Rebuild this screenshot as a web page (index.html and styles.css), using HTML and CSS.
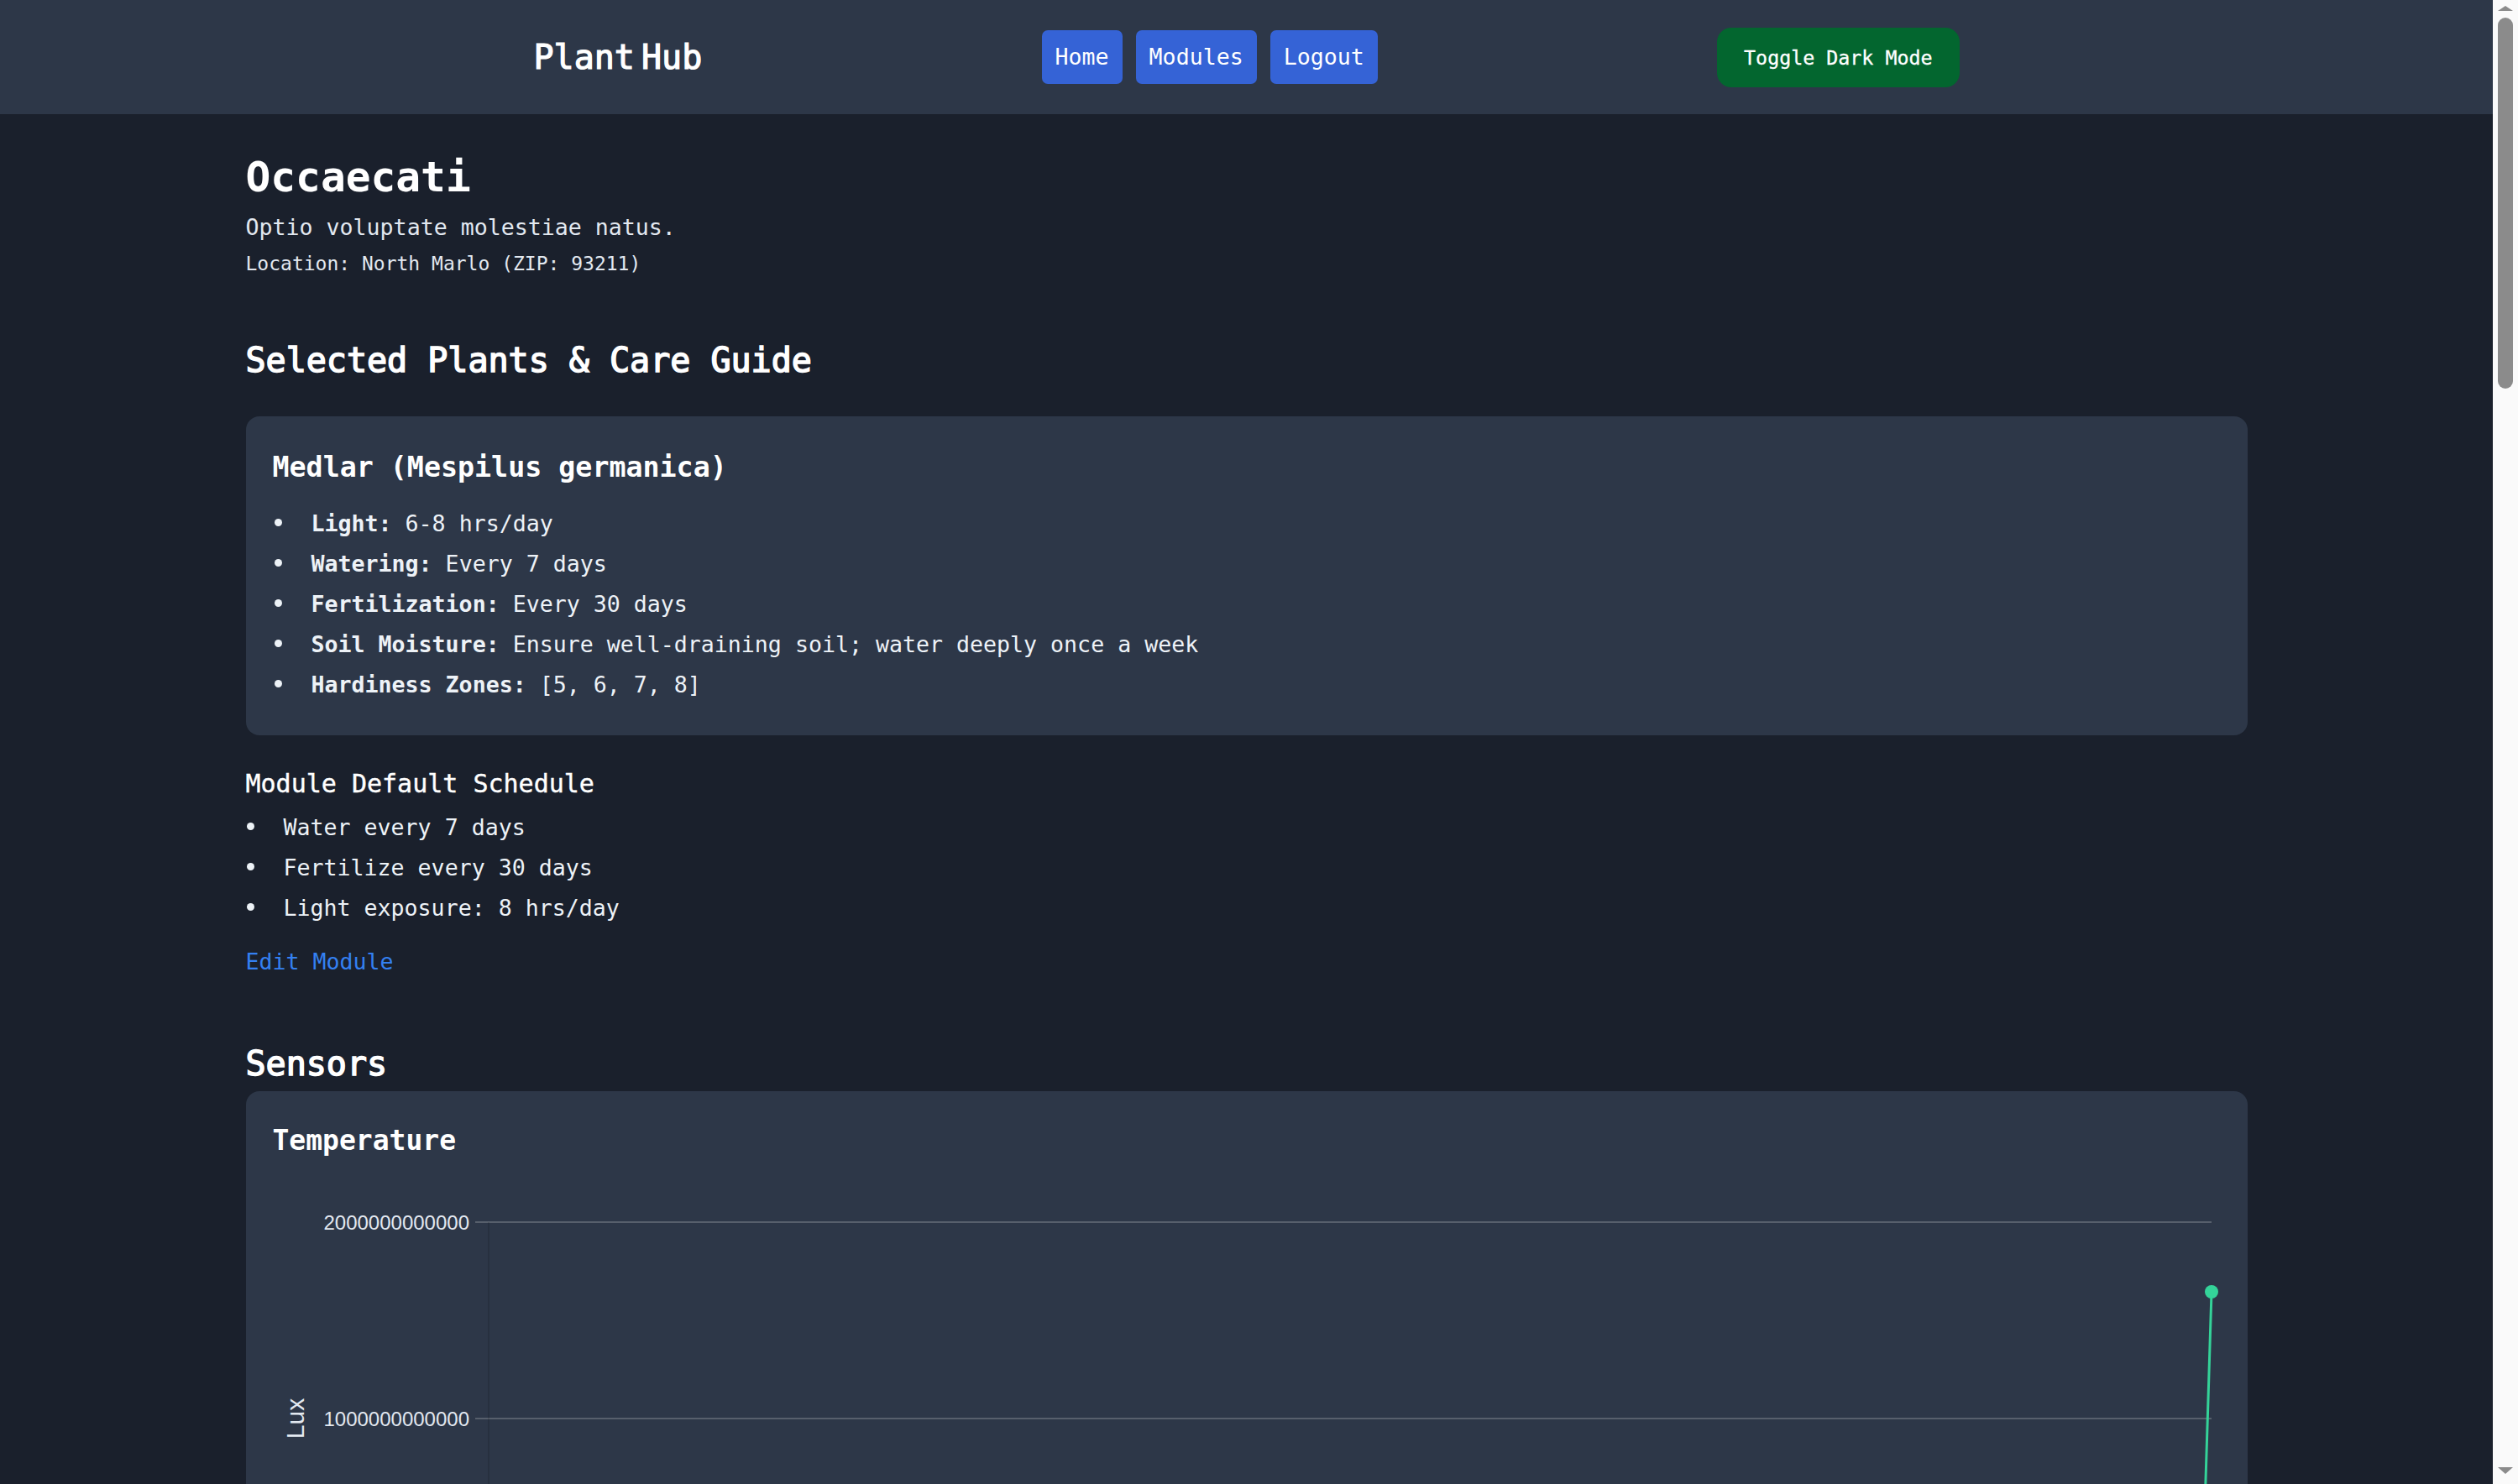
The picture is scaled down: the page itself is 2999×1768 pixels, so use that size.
FILE: index.html
```html
<!DOCTYPE html>
<html lang="en">
<head>
<meta charset="utf-8">
<title>Plant Hub</title>
<link rel="stylesheet" href="styles.css">
</head>
<body>
<header class="topbar">
  <div class="topbar-inner">
    <div class="brand">Plant Hub</div>
    <nav class="nav">
      <a class="nav-btn" href="#">Home</a>
      <a class="nav-btn" href="#">Modules</a>
      <a class="nav-btn" href="#">Logout</a>
    </nav>
    <button class="toggle" type="button">Toggle Dark Mode</button>
  </div>
</header>

<main class="page">
  <h1 class="title">Occaecati</h1>
  <p class="desc">Optio voluptate molestiae natus.</p>
  <p class="location">Location: North Marlo (ZIP: 93211)</p>

  <h2 class="section-title">Selected Plants &amp; Care Guide</h2>
  <div class="plant-card">
    <h3 class="plant-name">Medlar (Mespilus germanica)</h3>
    <ul class="care-list">
      <li><strong>Light:</strong> 6-8 hrs/day</li>
      <li><strong>Watering:</strong> Every 7 days</li>
      <li><strong>Fertilization:</strong> Every 30 days</li>
      <li><strong>Soil Moisture:</strong> Ensure well-draining soil; water deeply once a week</li>
      <li><strong>Hardiness Zones:</strong> [5, 6, 7, 8]</li>
    </ul>
  </div>

  <h3 class="schedule-title">Module Default Schedule</h3>
  <ul class="schedule-list">
    <li>Water every 7 days</li>
    <li>Fertilize every 30 days</li>
    <li>Light exposure: 8 hrs/day</li>
  </ul>
  <p class="edit"><a class="edit-link" href="#">Edit Module</a></p>

  <h2 class="section-title sensors-title">Sensors</h2>

  <section class="sensor-card">
    <h3 class="sensor-name">Temperature</h3>
    <svg class="chart" width="2320" height="640" viewBox="0 0 2320 640">
      <line class="grid" x1="241" y1="56" x2="2309" y2="56"/>
      <line class="grid" x1="241" y1="290" x2="2309" y2="290"/>
      <line class="grid" x1="241" y1="524" x2="2309" y2="524"/>
      <line class="axis" x1="257" y1="56" x2="257" y2="540"/>
      <text class="ylabel" x="234" y="56">2000000000000</text>
      <text class="ylabel" x="234" y="290">1000000000000</text>
      <text class="ytitle" transform="translate(26 290) rotate(-90)">Lux</text>
      <polyline class="series" points="257,524 2297,524 2309,139"/>
      <circle class="dot" cx="2309" cy="139" r="8"/>
    </svg>
  </section>
</main>

<div class="scrollbar" aria-hidden="true">
  <span class="sb-up"></span>
  <span class="sb-thumb"></span>
  <span class="sb-space"></span>
  <span class="sb-down"></span>
</div>
</body>
</html>
```

FILE: styles.css
```css
* {
  box-sizing: border-box;
}

html,
body {
  margin: 0;
  padding: 0;
}

body {
  background: #1a202c;
  color: #e2e8f0;
  font-family: "DejaVu Sans Mono", "Liberation Mono", monospace;
  font-size: 26.6px;
  padding-right: 30px;
}

/* fake classic scrollbar drawn over the right edge */
.scrollbar {
  position: fixed;
  top: 0;
  right: 0;
  width: 30px;
  height: 100vh;
  background: #fafafa;
  display: flex;
  flex-direction: column;
  align-items: center;
  padding: 7px 0 12px;
}

.sb-up {
  width: 0;
  height: 0;
  border-left: 9px solid transparent;
  border-right: 9px solid transparent;
  border-bottom: 6px solid #8b8b8b;
}

.sb-thumb {
  margin-top: 8px;
  width: 18px;
  height: 442px;
  border-radius: 9px;
  background: #8b8b8b;
}

.sb-space {
  flex: 1;
}

.sb-down {
  width: 0;
  height: 0;
  border-left: 9px solid transparent;
  border-right: 9px solid transparent;
  border-top: 8px solid #8b8b8b;
}

/* header */
.topbar {
  background: #2d3748;
  height: 136px;
}

.topbar-inner {
  width: 1698px;
  height: 100%;
  margin: 0 auto;
  display: flex;
  align-items: center;
  justify-content: space-between;
}

.brand {
  font-size: 40px;
  line-height: 50px;
  font-weight: 400;
  -webkit-text-stroke: 1.2px #ffffff;
  color: #ffffff;
  word-spacing: -16px;
}

.nav {
  display: flex;
  gap: 16px;
}

.nav-btn {
  display: block;
  background: #3563d6;
  color: #ffffff;
  text-decoration: none;
  font-size: 26.6px;
  line-height: 40px;
  padding: 12px 16px;
  border-radius: 7px;
}

.toggle {
  display: block;
  background: #03662f;
  color: #ffffff;
  border: 0;
  font-family: inherit;
  font-size: 23.3px;
  line-height: 35px;
  padding: 18px 32px;
  border-radius: 17px;
  -webkit-text-stroke: 0.3px #ffffff;
}

/* page */
.page {
  width: 2384px;
  margin: 0 auto;
  padding-top: 45px;
}

.title {
  margin: 0;
  font-size: 49.5px;
  line-height: 60px;
  font-weight: 700;
  color: #ffffff;
}

.desc {
  margin: 11px 0 0;
  line-height: 37px;
}

.location {
  margin: 7px 0 0;
  font-size: 23px;
  line-height: 36px;
}

.section-title {
  margin: 72px 0 42px;
  font-size: 40px;
  line-height: 50px;
  font-weight: 400;
  -webkit-text-stroke: 1.5px #ffffff;
  color: #ffffff;
}

.plant-card {
  background: #2d3748;
  border-radius: 16px;
  padding: 40px 32px 36px;
}

.plant-name {
  margin: 0;
  font-size: 33.3px;
  line-height: 42px;
  font-weight: 700;
  color: #ffffff;
}

.care-list,
.schedule-list {
  list-style: none;
  padding: 0;
  color: #edf2f7;
}

.care-list {
  margin: 22px 0 0;
}

.schedule-list {
  margin: 8px 0 0;
}

.care-list li,
.schedule-list li {
  line-height: 48px;
}

.care-list li::before,
.schedule-list li::before {
  content: "";
  display: inline-block;
  width: 9px;
  height: 9px;
  border-radius: 50%;
  background: currentColor;
  margin: 0 35px 0 2px;
  vertical-align: 6px;
}

.schedule-list li::before {
  margin-left: 1px;
}

.schedule-title {
  margin: 38px 0 0;
  font-size: 30px;
  line-height: 40px;
  font-weight: 400;
  -webkit-text-stroke: 0.4px #ffffff;
  color: #ffffff;
}

.edit {
  margin: 20px 0 0;
  line-height: 40px;
}

.edit-link {
  color: #3480f2;
  text-decoration: none;
}

.sensors-title {
  margin: 76px 0 8px;
}

.sensor-card {
  background: #2d3748;
  border-radius: 16px;
  padding: 38px 32px 32px;
}

.sensor-name {
  margin: 0;
  font-size: 33px;
  line-height: 42px;
  font-weight: 700;
  color: #ffffff;
}

.chart {
  display: block;
  margin-top: 20px;
}

.chart .grid {
  stroke: rgba(255, 255, 255, 0.2);
  stroke-width: 2;
}

.chart .axis {
  stroke: rgba(0, 0, 0, 0.12);
  stroke-width: 2;
}

.chart .ylabel {
  font-family: "Liberation Sans", Arial, sans-serif;
  font-size: 24px;
  fill: #e2e8f0;
  text-anchor: end;
  dominant-baseline: central;
}

.chart .ytitle {
  font-family: "Liberation Sans", Arial, sans-serif;
  font-size: 30px;
  fill: #e2e8f0;
  text-anchor: middle;
  dominant-baseline: central;
}

.chart .series {
  fill: none;
  stroke: #34d399;
  stroke-width: 3;
}

.chart .dot {
  fill: #34d399;
}
```
